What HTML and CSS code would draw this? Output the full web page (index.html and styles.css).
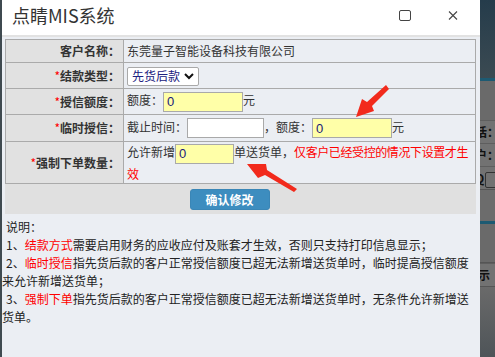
FILE: index.html
```html
<!DOCTYPE html>
<html>
  <head>
    <meta charset="utf-8">
    <title>点睛MIS系统</title>
    <link rel="stylesheet" href="styles.css">
  </head>
  <body>
    <div class="screen">
      <div class="edge"></div>
      <section class="dialog">
        <header class="titlebar">
          <h1>点睛MIS系统</h1>
          <span class="win-btn">
            <svg width="12" height="11" viewBox="0 0 12 11"><rect x="0.5" y="0.5" width="11" height="10" rx="1.5" fill="none" stroke="#444" stroke-width="1"/></svg>
          </span>
          <span class="win-btn">
            <svg width="10" height="9" viewBox="0 0 10 9"><path d="M1 0.5 L9 8.5 M9 0.5 L1 8.5" stroke="#444" stroke-width="1.1" fill="none"/></svg>
          </span>
        </header>
        <div class="body">
          <form id="credit" class="credit-form">
            <table class="form-table">
              <tr class="r1">
                <th>客户名称：</th>
                <td>东莞量子智能设备科技有限公司</td>
              </tr>
              <tr class="r2">
                <th><em>*</em>结款类型：</th>
                <td>
                  <span class="select">先货后款
                    <svg width="10" height="7" viewBox="0 0 10 7"><path d="M1 1 L5 5 L9 1" stroke="#111" stroke-width="2" fill="none"/></svg>
                  </span>
                </td>
              </tr>
              <tr class="r3">
                <th><em>*</em>授信额度：</th>
                <td>额度：<input class="txt yellow w80" type="text" value="0">元</td>
              </tr>
              <tr class="r4">
                <th><em>*</em>临时授信：</th>
                <td>截止时间：<input class="txt w78" type="text" value="">，额度：<input class="txt yellow w80" type="text" value="0">元</td>
              </tr>
              <tr class="r5">
                <th><em>*</em>强制下单数量：</th>
                <td class="wrap">允许新增<input class="txt yellow w60" type="text" value="0">单送货单，<span class="red tight">仅客户已经受控的情况下设置才生效</span></td>
              </tr>
            </table>
            <div class="actions">
              <button type="button" class="btn">确认修改</button>
            </div>
          </form>
          <div class="notes">
            <p>说明：</p>
            <p>1、<span class="red">结款方式</span>需要启用财务的应收应付及账套才生效，否则只支持打印信息显示；</p>
            <p>2、<span class="red">临时授信</span>指先货后款的客户正常授信额度已超无法新增送货单时，临时提高授信额度来允许新增送货单；</p>
            <p>3、<span class="red">强制下单</span>指先货后款的客户正常授信额度已超无法新增送货单时，无条件允许新增送货单。</p>
          </div>
        </div>
      </section>
      <div class="behind">
        <div class="bh-top"></div>
        <div class="bh-line"></div>
        <div class="bh-gap"></div>
        <div class="bh-text t1">话：</div>
        <div class="bh-text t2">户：</div>
        <div class="bh-text t3">Q<span class="bh-box"></span></div>
        <div class="bh-rule"></div>
        <div class="bh-gap2"></div>
        <div class="bh-line"></div>
        <div class="bh-gap3"></div>
        <div class="bh-text t4">示</div>
        <div class="bh-rest"></div>
      </div>
    </div>
    <!-- red annotation arrows -->
    <svg class="arrows" width="495" height="357" viewBox="0 0 495 357">
      <polygon points="386,85 389,89 372,106 374,111 356,117 362,99 367,102" fill="#f22a1c"/>
      <polygon points="297,189 294,192 265,175 258,178 247,164 266,164 267,170" fill="#f22a1c"/>
    </svg>
  </body>
</html>
```

FILE: styles.css
```css
html, body {
  margin: 0;
  padding: 0;
}
body {
  width: 495px;
  height: 357px;
  overflow: hidden;
  position: relative;
  font-family: "Noto Sans CJK SC", "Liberation Sans", sans-serif;
  font-size: 12px;
  color: #333;
}
.screen {
  display: flex;
  height: 357px;
}
.edge {
  width: 2px;
  background: #3f4a50;
}

/* dialog */
.dialog {
  width: 478px;
  display: flex;
  flex-direction: column;
  background: #ebeef3;
}
.titlebar {
  background: #fff;
  border-bottom: 2px solid #e2e2e2;
  display: flex;
  align-items: center;
  box-sizing: border-box;
  height: 37px;
  padding: 0 0 5px 10px;
}
.titlebar h1 {
  margin: 0;
  flex: 1;
  font-size: 18px;
  font-weight: normal;
  color: #333;
  line-height: 24px;
}
.win-btn {
  width: 50px;
  display: flex;
  justify-content: center;
  align-items: center;
}
.win-btn:last-child {
  width: 46px;
  margin-right: 4px;
}
.body {
  flex: 1;
  padding-top: 2px;
}

/* form */
.credit-form {
  margin: 0 4px 0 3px;
}
.form-table {
  width: 100%;
  border-collapse: collapse;
  border: 1px solid #aaa;
}
.form-table th, .form-table td {
  border: 1px solid #aaa;
  padding: 0 3px;
  font-size: 12px;
  line-height: 18px;
}
.form-table th {
  width: 111px;
  background: #e1e1e1;
  text-align: right;
  font-weight: bold;
  color: #333;
  white-space: nowrap;
}
.form-table td {
  background: #ebeef3;
}
.form-table em {
  font-style: normal;
  font-weight: normal;
  color: #f00;
}
.r1 { height: 23px; }
.r2 { height: 26px; }
.r3 { height: 26px; }
.r4 { height: 27px; }
.r5 { height: 42px; }

.select {
  display: inline-flex;
  align-items: center;
  justify-content: space-between;
  box-sizing: border-box;
  width: 72px;
  height: 19px;
  padding: 0 4px 0 4px;
  border: 1px solid #a9a9a9;
  border-radius: 2px;
  background: #fff;
  color: #202080;
  vertical-align: middle;
}
.txt {
  box-sizing: border-box;
  height: 20px;
  margin: 0;
  padding: 0 3px;
  border: 1px solid #a9a9a9;
  background: #fff;
  font-family: "Liberation Sans", sans-serif;
  font-size: 13px;
  color: #1a1a7a;
  vertical-align: middle;
  outline: none;
}
.txt.yellow {
  background: #ffffa8;
}
.w60 { width: 59px; }
.w78 { width: 77px; }
.w80 { width: 80px; }
.form-table .wrap {
  line-height: 19px;
  padding-right: 0;
}
.red {
  color: #f00;
}
.tight {
  letter-spacing: -0.4px;
}

.actions {
  height: 30px;
  background: #e0e0e0;
  display: flex;
  justify-content: center;
  align-items: center;
  padding-right: 22px;
}
.btn {
  width: 80px;
  height: 21px;
  padding: 0;
  border: 1px solid #3a86b6;
  border-radius: 3px;
  background: #3d8dbf;
  color: #fff;
  font-family: "Noto Sans CJK SC", sans-serif;
  font-size: 12px;
  font-weight: bold;
  line-height: 19px;
}

/* notes */
.notes {
  padding: 4px 6px 0 0;
  line-height: 18px;
  color: #222;
}
.notes p {
  margin: 0;
  text-indent: 4px;
}

/* page behind the dialog */
.behind {
  flex: 1;
  overflow: hidden;
  display: flex;
  flex-direction: column;
  background: #6e6e6e;
}
.bh-top {
  height: 78px;
  background: linear-gradient(#253c4b, #3b4a52);
}
.bh-line {
  height: 3px;
  background: #1d5a72;
}
.bh-gap { height: 39px; background: #6a6a6a; }
.bh-text {
  height: 22px;
  line-height: 22px;
  margin-left: -5px;
  font-weight: bold;
  color: #111;
  white-space: nowrap;
  background: #727272;
  border-top: 1px solid #5e5e5e;
}
.bh-box {
  display: inline-block;
  width: 10px;
  height: 14px;
  margin-left: 1px;
  border: 1px solid #333;
  vertical-align: middle;
  border-radius: 2px;
}
.bh-rule { height: 20px; background: #6c6c6c; border-top: 1px solid #555; }
.bh-gap2 { height: 11px; background: #6c6c6c; }
.bh-gap3 { height: 38px; background: #6a6a6a; border-bottom: 1px solid #555; }
.t4 { margin-left: -2px; }
.bh-rest {
  flex: 1;
  background: linear-gradient(#6a6a6a, #4e5458);
  border-top: 1px solid #555;
}

.arrows {
  position: absolute;
  left: 0;
  top: 0;
  pointer-events: none;
}
```
